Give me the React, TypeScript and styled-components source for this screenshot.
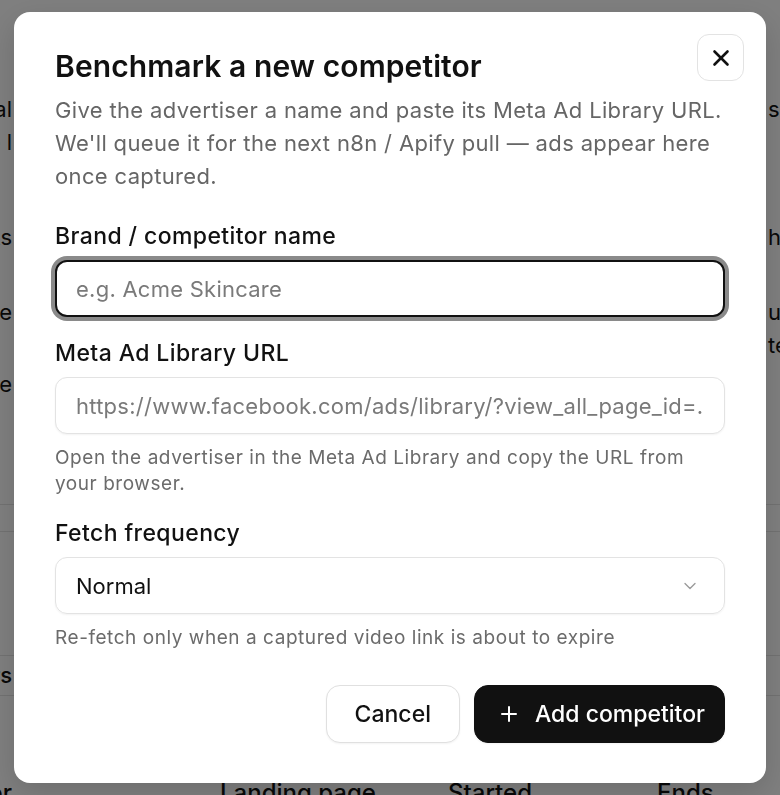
import styled, { createGlobalStyle } from "styled-components";
import { ChevronDown, Plus, X } from "lucide-react";

const GlobalStyle = createGlobalStyle`
  * { box-sizing: border-box; }
  html, body { margin: 0; padding: 0; overflow: hidden; }
  body {
    font-family: Inter, "Noto Sans", "Liberation Sans", sans-serif;
    background: #ffffff;
    color: #111111;
  }
`;

/* ---------- page behind the dialog ---------- */

const Page = styled.div`
  display: flex;
  flex-direction: column;
  font-size: 22px;
  line-height: 33px;
  color: #111;
`;

const TopArea = styled.div`
  flex-shrink: 0;
  height: 504px;
  display: grid;
  grid-template-columns: 12px 1fr 12px;
  padding-top: 93px;
`;

const Side = styled.div<{ $end?: boolean }>`
  display: flex;
  flex-direction: column;
  align-items: ${(p) => (p.$end ? "flex-end" : "flex-start")};
`;

const Line = styled.div<{ $gap?: number }>`
  white-space: nowrap;
  margin-top: ${(p) => p.$gap ?? 0}px;
`;

const Band = styled.div`
  flex-shrink: 0;
  height: 28px;
  border-top: 1px solid #e4e4e4;
  border-bottom: 1px solid #e4e4e4;
`;

const RowLine = styled.div`
  flex-shrink: 0;
  margin-top: 123px;
  height: 41px;
  border-top: 1px solid #e4e4e4;
  border-bottom: 1px solid #e4e4e4;
  display: grid;
  grid-template-columns: 12px 1fr;
  align-items: center;
  font-weight: 500;
`;

const EndCell = styled.div`
  display: flex;
  justify-content: flex-end;
  white-space: nowrap;
`;

const HeadRow = styled.div`
  flex-shrink: 0;
  margin-top: 80px;
  display: grid;
  grid-template-columns: 12px 208px 228px 209px 1fr;
  font-size: 24px;
  font-weight: 500;
  white-space: nowrap;
`;

/* ---------- overlay + dialog ---------- */

const Overlay = styled.div`
  position: fixed;
  inset: 0;
  background: rgba(0, 0, 0, 0.5);
  display: flex;
  align-items: center;
  justify-content: center;
`;

const Dialog = styled.div`
  position: relative;
  width: 752px;
  background: #ffffff;
  border-radius: 16px;
  padding: 36px 41px 40px;
  box-shadow: 0 10px 30px rgba(0, 0, 0, 0.15);
`;

const CloseButton = styled.button`
  position: absolute;
  top: 22px;
  right: 22px;
  width: 47px;
  height: 47px;
  border-radius: 12px;
  border: 1px solid #e3e3e3;
  background: #fff;
  display: flex;
  align-items: center;
  justify-content: center;
  color: #111;
  padding: 0;
`;

const Title = styled.h2`
  margin: 0;
  font-size: 30px;
  line-height: 36px;
  font-weight: 600;
  color: #111;
  letter-spacing: 0.1px;
`;

const Description = styled.p`
  margin: 10px 0 0;
  font-size: 22px;
  line-height: 33px;
  color: #666;
  letter-spacing: 0.35px;
`;

const Form = styled.div`
  margin-top: 28px;
  display: flex;
  flex-direction: column;
  gap: 21px;
`;

const Field = styled.div`
  display: flex;
  flex-direction: column;
  gap: 8px;
`;

const Label = styled.label`
  font-size: 23px;
  line-height: 31px;
  font-weight: 500;
  color: #111;
  letter-spacing: 0.4px;
`;

const Input = styled.input<{ $focused?: boolean }>`
  height: 57px;
  width: 100%;
  border-radius: 12px;
  border: ${(p) => (p.$focused ? "2px solid #111" : "1px solid #e3e3e3")};
  box-shadow: ${(p) =>
    p.$focused ? "0 0 0 4px #8a8a8a" : "0 1px 2px rgba(0, 0, 0, 0.05)"};
  padding: 0 ${(p) => (p.$focused ? 19 : 20)}px;
  font-family: inherit;
  font-size: 22px;
  letter-spacing: 0.25px;
  color: #111;
  background: #fff;
  outline: none;

  &::placeholder {
    color: #7a7a7a;
  }
`;

const Select = styled.div`
  height: 57px;
  border-radius: 12px;
  border: 1px solid #e3e3e3;
  box-shadow: 0 1px 2px rgba(0, 0, 0, 0.05);
  padding: 0 24px 0 20px;
  display: flex;
  align-items: center;
  justify-content: space-between;
  font-size: 22px;
  color: #111;
`;

const Help = styled.p`
  margin: 3px 0 0;
  font-size: 19px;
  line-height: 26px;
  color: #6b6b6b;
  letter-spacing: 0.55px;
`;

const Footer = styled.div`
  margin-top: 34px;
  display: flex;
  justify-content: flex-end;
  gap: 14px;
`;

const Button = styled.button<{ $primary?: boolean }>`
  height: 58px;
  border-radius: 14px;
  font-family: inherit;
  font-size: 23px;
  font-weight: 500;
  display: flex;
  align-items: center;
  gap: 14px;
  padding: ${(p) => (p.$primary ? "0 19px 0 22px" : "0 28px")};
  border: 1px solid ${(p) => (p.$primary ? "#111" : "#e0e0e0")};
  background: ${(p) => (p.$primary ? "#111" : "#fff")};
  color: ${(p) => (p.$primary ? "#fff" : "#111")};
  box-shadow: 0 1px 2px rgba(0, 0, 0, 0.05);
`;

const App = () => {
  return (
    <>
      <GlobalStyle />
      <Page>
        <TopArea>
          <Side $end>
            <Line>Tone: seasonal</Line>
            <Line>Try the l</Line>
            <Line $gap={62}>Hooks</Line>
            <Line $gap={42}>Ad type</Line>
            <Line $gap={39}>Example</Line>
          </Side>
          <div />
          <Side>
            <Line>skincare</Line>
            <Line $gap={95}>hero</Line>
            <Line $gap={42}>upload</Line>
            <Line>text</Line>
          </Side>
        </TopArea>
        <Band />
        <RowLine>
          <EndCell>Filters</EndCell>
        </RowLine>
        <HeadRow>
          <EndCell>Competitor</EndCell>
          <div />
          <div>Landing page</div>
          <div>Started</div>
          <div>Ends</div>
        </HeadRow>
      </Page>

      <Overlay>
        <Dialog>
          <CloseButton aria-label="Close">
            <X size={26} strokeWidth={2.4} />
          </CloseButton>
          <Title>Benchmark a new competitor</Title>
          <Description>
            Give the advertiser a name and paste its Meta Ad Library URL.
            We'll queue it for the next n8n / Apify pull — ads appear here
            once captured.
          </Description>

          <Form>
            <Field>
              <Label>Brand / competitor name</Label>
              <Input $focused placeholder="e.g. Acme Skincare" />
            </Field>
            <Field>
              <Label>Meta Ad Library URL</Label>
              <Input placeholder="https://www.facebook.com/ads/library/?view_all_page_id=..." />
              <Help>
                Open the advertiser in the Meta Ad Library and copy the URL
                from your browser.
              </Help>
            </Field>
            <Field>
              <Label>Fetch frequency</Label>
              <Select>
                <span>Normal</span>
                <ChevronDown size={20} strokeWidth={1.6} color="#9a9a9a" />
              </Select>
              <Help>Re-fetch only when a captured video link is about to expire</Help>
            </Field>
          </Form>

          <Footer>
            <Button>Cancel</Button>
            <Button $primary>
              <Plus size={24} strokeWidth={2} />
              Add competitor
            </Button>
          </Footer>
        </Dialog>
      </Overlay>
    </>
  );
};

export default App;
